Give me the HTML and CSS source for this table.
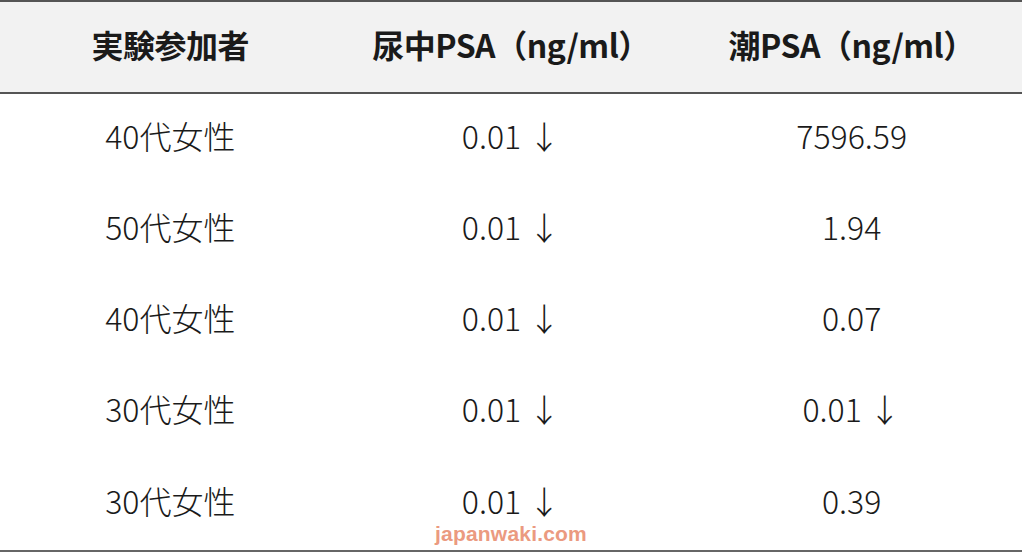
FILE: index.html
```html
<!DOCTYPE html>
<html lang="ja">
<head>
<meta charset="utf-8">
<link rel="stylesheet" href="styles.css">
</head>
<body>
<div class="wrap">
  <table class="psa">
    <thead>
      <tr><th>実験参加者</th><th>尿中PSA（ng/ml）</th><th>潮PSA（ng/ml）</th></tr>
    </thead>
    <tbody>
      <tr><td>40代女性</td><td>0.01 ↓</td><td>7596.59</td></tr>
      <tr><td>50代女性</td><td>0.01 ↓</td><td>1.94</td></tr>
      <tr><td>40代女性</td><td>0.01 ↓</td><td>0.07</td></tr>
      <tr><td>30代女性</td><td>0.01 ↓</td><td>0.01 ↓</td></tr>
      <tr><td>30代女性</td><td>0.01 ↓</td><td>0.39</td></tr>
    </tbody>
  </table>
  <div class="watermark">japanwaki.com</div>
</div>
</body>
</html>
```
FILE: styles.css
```css
html, body {
  margin: 0;
  padding: 0;
  background: #ffffff;
}
.wrap {
  position: relative;
  width: 1022px;
  height: 558px;
}
.psa {
  width: 1022px;
  border-collapse: collapse;
  table-layout: fixed;
  font-family: "Noto Sans CJK JP", "Noto Sans", sans-serif;
  color: #1a1a1a;
}
.psa th {
  background: #f2f2f2;
  height: 92px;
  padding: 0 0 6px 0;
  box-sizing: border-box;
  font-size: 32px;
  line-height: 1;
  font-weight: 700;
  border-top: 2px solid #555;
  border-bottom: 2px solid #555;
  text-align: center;
  letter-spacing: -0.5px;
}
.psa td {
  height: 91.2px;
  padding: 0 0 8px 0;
  box-sizing: border-box;
  font-size: 32px;
  line-height: 1;
  font-weight: 300;
  text-align: center;
}
.psa tbody tr:last-child td {
  height: 93.2px;
  border-bottom: 2px solid #666;
}
.watermark {
  position: absolute;
  left: 0;
  right: 0;
  top: 522px;
  text-align: center;
  font-family: "Liberation Sans", Arial, sans-serif;
  font-weight: 700;
  font-size: 21px;
  color: #eb9a80;
  letter-spacing: 0.2px;
}
```
